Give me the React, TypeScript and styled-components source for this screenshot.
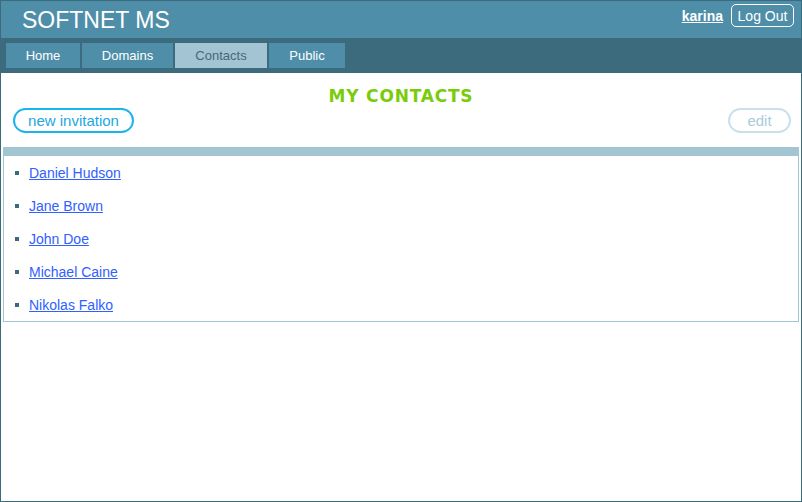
import React from "react";
import styled, { createGlobalStyle } from "styled-components";

const Global = createGlobalStyle`
  html, body { margin: 0; padding: 0; background: #ffffff; }
  body { font-family: "Liberation Sans", Arial, sans-serif; }
  * { box-sizing: border-box; }
`;

const Page = styled.div`
  width: 802px;
  height: 502px;
  border: 1px solid #3d6b7e;
  background: #ffffff;
  display: flex;
  flex-direction: column;
`;

const Header = styled.header`
  height: 37px;
  background: #4f8ea8;
  display: flex;
  align-items: center;
  justify-content: space-between;
  padding: 0 7px 0 21px;
`;

const Brand = styled.div`
  color: #ffffff;
  font-size: 23px;
  line-height: 1;
  padding-top: 1px;
`;

const UserArea = styled.div`
  display: flex;
  align-items: center;
  gap: 8px;
  margin-top: -8px;
`;

const UserLink = styled.a`
  color: #ffffff;
  font-weight: bold;
  font-size: 14px;
  text-decoration: underline;
`;

const LogOut = styled.button`
  font-family: "Liberation Sans", Arial, sans-serif;
  font-size: 14px;
  color: #ffffff;
  background: transparent;
  border: 1px solid #ffffff;
  border-radius: 5px;
  height: 23px;
  width: 63px;
  padding: 0;
`;

const Nav = styled.nav`
  height: 35px;
  background: #3d6b7e;
  display: flex;
  align-items: flex-start;
  padding: 5px 0 0 5px;
  gap: 2px;
`;

const Tab = styled.a<{ $active?: boolean; $w: number }>`
  width: ${(p) => p.$w}px;
  height: 25px;
  display: flex;
  align-items: center;
  justify-content: center;
  font-size: 13px;
  text-decoration: none;
  color: ${(p) => (p.$active ? "#46697a" : "#ffffff")};
  background: ${(p) => (p.$active ? "#a2c4d3" : "#4f8ea8")};
`;

const Content = styled.main`
  display: flex;
  flex-direction: column;
  padding: 0 2px;
`;

const Title = styled.h1`
  margin: 13px 0 0;
  text-align: center;
  font-family: "DejaVu Sans", Verdana, sans-serif;
  font-weight: bold;
  font-size: 17px;
  letter-spacing: 0.8px;
  line-height: 20px;
  color: #7acc0a;
`;

const Actions = styled.div`
  display: flex;
  justify-content: space-between;
  padding: 2px 8px 0 10px;
  margin-bottom: 14px;
`;

const PillButton = styled.button<{ $disabled?: boolean; $w: number }>`
  font-family: "Liberation Sans", Arial, sans-serif;
  font-size: 15px;
  width: ${(p) => p.$w}px;
  height: 25px;
  padding: 0 0 1px;
  border-radius: 13px;
  background: #ffffff;
  border: 2px solid ${(p) => (p.$disabled ? "#c6e1eb" : "#1ab4ee")};
  color: ${(p) => (p.$disabled ? "#a8ccda" : "#1ea7df")};
`;

const ListBox = styled.div`
  border: 1px solid #a2c4d3;
  border-top: 9px solid #a2c4d3;
`;

const List = styled.ul`
  list-style: none;
  margin: 0;
  padding: 0;
`;

const Item = styled.li`
  display: flex;
  align-items: center;
  height: 33px;
  padding-left: 11px;
  font-size: 14px;
  &::before {
    content: "";
    width: 4px;
    height: 4px;
    background: #3d6b7e;
    margin-right: 10px;
  }
`;

const ContactLink = styled.a`
  color: #3060ff;
  text-decoration: underline;
`;

const contacts = ["Daniel Hudson", "Jane Brown", "John Doe", "Michael Caine", "Nikolas Falko"];

export default function App() {
  return (
    <>
      <Global />
      <Page>
        <Header>
          <Brand>SOFTNET MS</Brand>
          <UserArea>
            <UserLink href="#">karina</UserLink>
            <LogOut>Log Out</LogOut>
          </UserArea>
        </Header>
        <Nav>
          <Tab href="#" $w={74}>Home</Tab>
          <Tab href="#" $w={91}>Domains</Tab>
          <Tab href="#" $w={92} $active>Contacts</Tab>
          <Tab href="#" $w={76}>Public</Tab>
        </Nav>
        <Content>
          <Title>MY CONTACTS</Title>
          <Actions>
            <PillButton $w={121}>new invitation</PillButton>
            <PillButton $w={63} $disabled>edit</PillButton>
          </Actions>
          <ListBox>
            <List>
              {contacts.map((c) => (
                <Item key={c}>
                  <ContactLink href="#">{c}</ContactLink>
                </Item>
              ))}
            </List>
          </ListBox>
        </Content>
      </Page>
    </>
  );
}
